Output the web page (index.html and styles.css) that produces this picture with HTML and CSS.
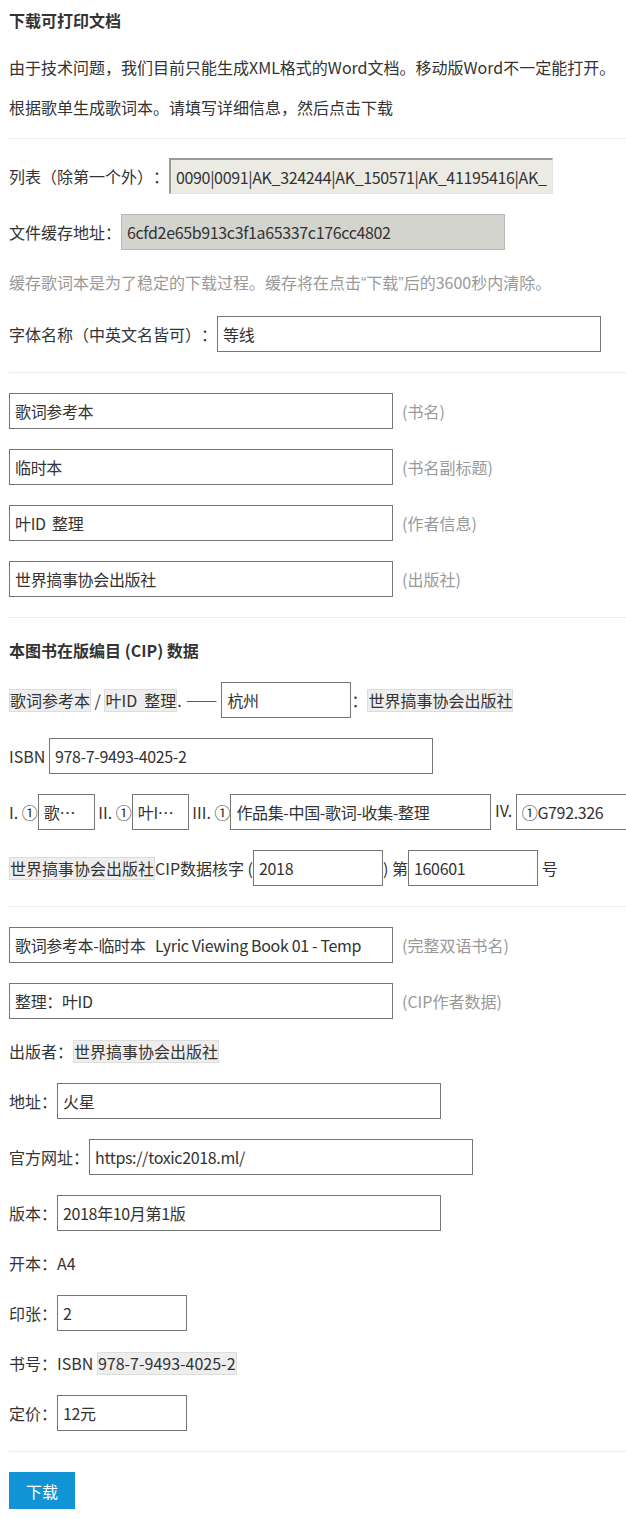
FILE: index.html
```html
<!DOCTYPE html>
<html lang="zh-CN">
<head>
<meta charset="utf-8">
<title>下载可打印文档</title>
<link rel="stylesheet" href="styles.css">
</head>
<body>
<div class="page">
  <h3 class="title">下载可打印文档</h3>
  <p class="text">由于技术问题，我们目前只能生成XML格式的Word文档。移动版Word不一定能打开。</p>
  <p class="text text-tight">根据歌单生成歌词本。请填写详细信息，然后点击下载</p>
  <hr class="rule rule-first">
  <div class="row"><span>列表（除第一个外）：</span><input class="field field-readonly" readonly value="0090|0091|AK_324244|AK_150571|AK_41195416|AK_6091|AK_7781"></div>
  <div class="row"><span>文件缓存地址：</span><input class="field field-cache" readonly value="6cfd2e65b913c3f1a65337c176cc4802"></div>
  <p class="text note">缓存歌词本是为了稳定的下载过程。缓存将在点击<span class="latin">“</span>下载<span class="latin">”</span>后的3600秒内清除。</p>
  <div class="row"><span>字体名称（中英文名皆可）：</span><input class="field" value="等线"></div>
  <hr class="rule">
  <div class="row"><input class="field" value="歌词参考本"><span class="hint">(书名)</span></div>
  <div class="row"><input class="field" value="临时本"><span class="hint">(书名副标题)</span></div>
  <div class="row"><input class="field" value="叶ID  整理"><span class="hint">(作者信息)</span></div>
  <div class="row"><input class="field" value="世界搞事协会出版社"><span class="hint">(出版社)</span></div>
  <hr class="rule">
  <h3 class="title title-cip">本图书在版编目 (CIP) 数据</h3>
  <div class="row"><span class="hl">歌词参考本</span><span> / </span><span class="hl">叶ID  整理</span><span>. </span><span class="dash">——</span><input class="field field-s" value="杭州"><span>：</span><span class="hl">世界搞事协会出版社</span></div>
  <div class="row"><span>ISBN </span><input class="field" value="978-7-9493-4025-2"></div>
  <div class="row"><span>I. ①</span><input class="field field-xs" value="歌词参考本"><span> II. ①</span><input class="field field-xs" value="叶ID  整理"><span> III. ①</span><input class="field field-m" value="作品集-中国-歌词-收集-整理"><span class="raised"> IV. </span><input class="field field-s" value="①G792.326"></div>
  <div class="row"><span class="hl">世界搞事协会出版社</span><span>CIP数据核字 (</span><input class="field field-s" value="2018"><span>) 第</span><input class="field field-s" value="160601"><span> 号</span></div>
  <hr class="rule">
  <div class="row"><input class="field" value="歌词参考本-临时本   Lyric Viewing Book 01 - Temp"><span class="hint">(完整双语书名)</span></div>
  <div class="row"><input class="field" value="整理：叶ID"><span class="hint">(CIP作者数据)</span></div>
  <div class="line"><span>出版者：</span><span class="hl">世界搞事协会出版社</span></div>
  <div class="row"><span>地址：</span><input class="field" value="火星"></div>
  <div class="row"><span>官方网址：</span><input class="field" value="https://toxic2018.ml/"></div>
  <div class="row"><span>版本：</span><input class="field" value="2018年10月第1版"></div>
  <div class="line"><span>开本：A4</span></div>
  <div class="row"><span>印张：</span><input class="field field-s" value="2"></div>
  <div class="line"><span>书号：ISBN </span><span class="hl">978-7-9493-4025-2</span></div>
  <div class="row"><span>定价：</span><input class="field field-s" value="12元"></div>
  <hr class="rule">
  <button class="btn" type="button">下载</button>
</div>
</body>
</html>
```

FILE: styles.css
```css
html, body {
  margin: 0;
  padding: 0;
  background: #fff;
}

body {
  font-family: "Noto Sans CJK SC", "Microsoft YaHei", sans-serif;
  font-size: 16px;
  line-height: 24px;
  color: #333;
  text-spacing-trim: space-all;
}

.page {
  display: flex;
  flex-direction: column;
  gap: 20px;
  padding: 8px 0 20px 9px;
  overflow: hidden;
}

.title {
  margin: 0 0 3px;
  font-size: 16px;
  font-weight: bold;
  line-height: 24px;
}

.title-cip {
  margin: 0;
}

.text {
  margin: 0;
  white-space: nowrap;
}

.text-tight {
  margin-top: -4px;
}

.note {
  color: #999;
}

.latin {
  font-family: "Liberation Sans", sans-serif;
}

.rule {
  margin: 0;
  height: 0;
  border: 0;
  border-top: 1px solid #eee;
}

.rule-first {
  margin: -1px 0;
}

.row {
  display: flex;
  align-items: center;
  height: 36px;
  white-space: pre;
}

.line {
  display: flex;
  align-items: center;
  height: 24px;
  white-space: pre;
}

.dash {
  display: inline-block;
  width: 36px;
  overflow: hidden;
  letter-spacing: 0;
  font-variant-east-asian: full-width;
}

.field {
  box-sizing: border-box;
  flex: none;
  width: 384px;
  height: 36px;
  margin: 0;
  padding: 0 5px;
  border: 1px solid #767676;
  border-radius: 0;
  background: #fff;
  color: #333;
  font: inherit;
  letter-spacing: -0.35px;
  text-spacing-trim: space-all;
  outline: none;
}

.field-readonly {
  background: #ebebe4;
  border-width: 2px 1px 1px 2px;
  border-color: #9a9a9a #e3e3e3 #e3e3e3 #9a9a9a;
}

.field-cache {
  background: #d4d4cf;
  border-color: #b9b9b9;
}

.field-s {
  width: 130px;
}

.field-xs {
  width: 57px;
  text-overflow: ellipsis;
}

.field-m {
  width: 261px;
}

.hint {
  margin-left: 9px;
  color: #999;
}

.hl {
  display: inline-block;
  line-height: 21px;
  background: #eee;
  border: 1px solid #ddd;
}

.raised {
  align-self: flex-start;
  margin-top: 4px;
}

.btn {
  align-self: flex-start;
  height: 37px;
  padding: 0 17px;
  margin: 0;
  border: 0;
  border-radius: 0;
  background: #1194d6;
  color: #fff;
  font: inherit;
}
```
